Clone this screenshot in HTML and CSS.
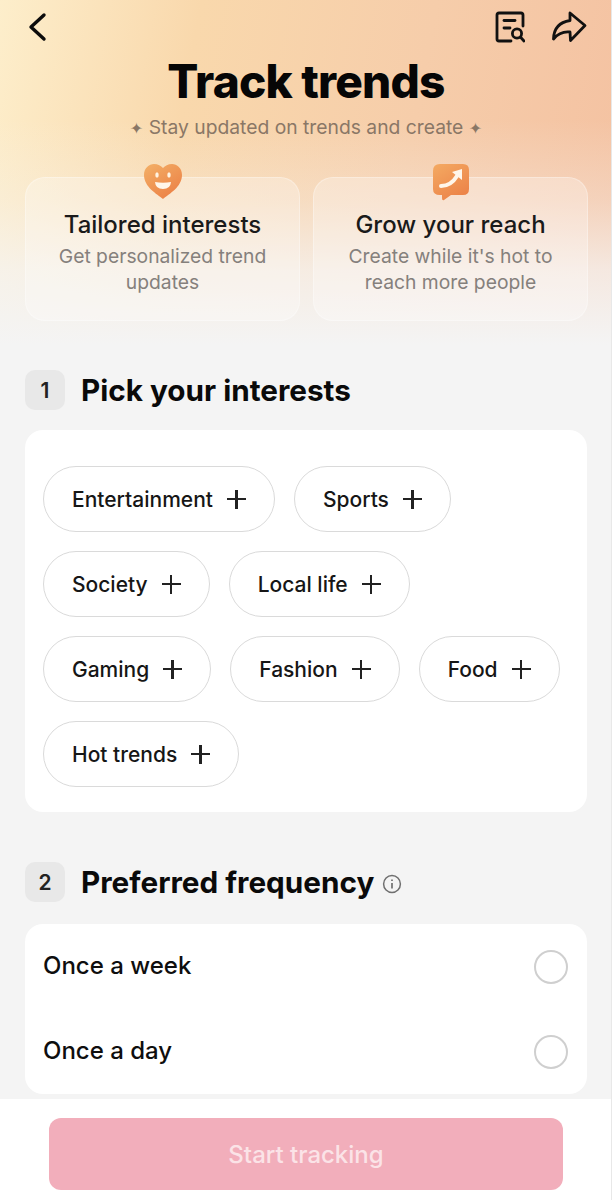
FILE: index.html
```html
<!doctype html>
<html lang="en">
<head>
    <meta charset="utf-8">
    <meta name="viewport" content="width=device-width, initial-scale=1">
    <title>Track trends</title>

    <link rel="stylesheet" href="styles.css">

</head>
<body>
<div class="page">
    <main class="content">
        <div class="nav">
            <svg class="icon-back" width="20" height="30" viewBox="0 0 20 30" fill="none" stroke="#0c0c0c" stroke-width="3.4" stroke-linecap="round" stroke-linejoin="round">
                <path d="M16 3 L3 15 L16 27"/>
            </svg>
            <div class="nav-right">
                <svg width="30" height="32" viewBox="0 0 30 32" fill="none" stroke="#111" stroke-width="2.8" stroke-linecap="round" stroke-linejoin="round">
                    <path d="M28 15 V4 Q28 2 26 2 H4 Q2 2 2 4 V28 Q2 30 4 30 H16"/>
                    <path d="M9 9.5 H20"/>
                    <path d="M9 17 H15"/>
                    <circle cx="22" cy="22.5" r="4.6"/>
                    <path d="M25.6 26.2 L29 30"/>
                </svg>
                <svg width="36" height="32" viewBox="0 0 36 32" fill="none" stroke="#111" stroke-width="2.8" stroke-linejoin="round" stroke-linecap="round">
                    <path d="M19 2 L34 14.5 L19.5 29.5 L19 21 Q9 20 2.5 28 Q3 12 19 9.5 Z"/>
                </svg>
            </div>
        </div>

        <h1 class="title">Track trends</h1>
        <p class="subtitle"><span class="star">✦</span> Stay updated on trends and create <span class="star">✦</span></p>

        <div class="benefits">
            <div class="benefit">
                <svg class="benefit-icon" width="40" height="38" viewBox="0 0 40 38">
                    <defs>
                        <linearGradient id="heart-fill" x1="0" y1="0" x2="0.7" y2="1">
                            <stop offset="0" stop-color="#f3b067"/>
                            <stop offset="1" stop-color="#ec8146"/>
                        </linearGradient>
                    </defs>
                    <path fill="url(#heart-fill)" d="M20 36 C14 31 1 24 1 12 C1 5 6 1 11 1 C15 1 18 3 20 5 C22 3 25 1 29 1 C34 1 39 5 39 12 C39 24 26 31 20 36 Z"/>
                    <ellipse cx="14" cy="12" rx="1.7" ry="2.8" fill="#fff3e2"/>
                    <ellipse cx="26" cy="12" rx="1.7" ry="2.8" fill="#fff3e2"/>
                    <path fill="#fff6ea" d="M12 19 Q20 20.5 28 19 Q27.5 26 20 26 Q12.5 26 12 19 Z"/>
                </svg>
                <h3>Tailored interests</h3>
                <p>Get personalized trend updates</p>
            </div>
            <div class="benefit">
                <svg class="benefit-icon" width="38" height="38" viewBox="0 0 38 38">
                    <defs>
                        <linearGradient id="bubble-fill" x1="0" y1="0" x2="0.6" y2="1">
                            <stop offset="0" stop-color="#f4aa62"/>
                            <stop offset="1" stop-color="#ec8449"/>
                        </linearGradient>
                    </defs>
                    <path fill="url(#bubble-fill)" d="M8 1 H31 Q37 1 37 7 V26 Q37 32 31 32 H19 L12 37 Q10 38 10 35 V32 H8 Q1 32 1 26 V8 Q1 1 8 1 Z"/>
                    <path fill="none" stroke="#fff6ea" stroke-width="4" stroke-linecap="round" d="M9 23 Q19 23 25 13"/>
                    <path fill="#fff6ea" d="M20 9 L30 6 L30 17 Z"/>
                </svg>
                <h3>Grow your reach</h3>
                <p>Create while it's hot to reach more people</p>
            </div>
        </div>

        <div class="section-head first">
            <span class="step">1</span>
            <h2>Pick your interests</h2>
        </div>
        <div class="panel chips">
            <div class="chip">Entertainment <span class="plus"></span></div>
            <div class="chip">Sports <span class="plus"></span></div>
            <div class="chip">Society <span class="plus"></span></div>
            <div class="chip">Local life <span class="plus"></span></div>
            <div class="chip">Gaming <span class="plus"></span></div>
            <div class="chip">Fashion <span class="plus"></span></div>
            <div class="chip">Food <span class="plus"></span></div>
            <div class="chip">Hot trends <span class="plus"></span></div>
        </div>

        <div class="section-head">
            <span class="step">2</span>
            <h2>Preferred frequency</h2>
            <svg class="info" width="20" height="20" viewBox="0 0 20 20" fill="none" stroke="#6f6f6f" stroke-width="1.5">
                <circle cx="10" cy="10" r="8.4"/>
                <path d="M10 9 V14.5" stroke-width="1.7"/>
                <path d="M10 5.4 V7" stroke-width="1.7"/>
            </svg>
        </div>
        <div class="panel options">
            <div class="option"><span class="option-label">Once a week</span> <span class="radio"></span></div>
            <div class="option"><span class="option-label">Once a day</span> <span class="radio"></span></div>
        </div>
    </main>

    <div class="footer">
        <div class="btn-start">Start tracking</div>
    </div>
</div>
</body>
</html>
```

FILE: styles.css
```css
body {
    margin: 0;
    font-family: Inter, "Liberation Sans", Arial, sans-serif;
    color: #111;
    background: #f4f4f4;
}

.page {
    height: 1200px;
    display: flex;
    flex-direction: column;
    overflow: hidden;
    border-right: 1px solid #e8e8e8;
}

/* peach wash behind the header, fades out into the page grey */
.content {
    flex: 1;
    padding: 0 24px 0 25px;
    background:
        linear-gradient(to bottom, rgba(245, 245, 245, 0) 120px, rgba(245, 245, 245, 0.3) 200px, rgba(245, 245, 245, 0.75) 270px, #f4f4f4 345px),
        linear-gradient(100deg, #fdeecb 0%, #f9d8ac 30%, #f6cdaa 65%, #f4c1a1 100%);
    background-repeat: no-repeat;
    background-size: 100% 345px, 100% 345px;
    background-color: #f4f4f4;
}

.nav {
    height: 56px;
    display: flex;
    justify-content: space-between;
    align-items: flex-start;
}

.icon-back {
    margin-top: 12px;
    margin-left: 3px;
}

.nav-right {
    display: flex;
    gap: 26px;
    margin-top: 11px;
}

.title {
    margin: 0;
    font-size: 46px;
    line-height: 50px;
    font-weight: 800;
    letter-spacing: -0.8px;
    text-align: center;
    color: #060606;
}

.subtitle {
    margin: 8px 0 0;
    font-size: 19.3px;
    line-height: 26px;
    text-align: center;
    color: #8a7766;
}

.star {
    font-family: "DejaVu Sans", sans-serif;
    font-size: 16px;
}

.benefits {
    display: grid;
    grid-template-columns: 275px 275px;
    gap: 13px;
    margin-top: 35px;
}

.benefit {
    position: relative;
    height: 144px;
    box-sizing: border-box;
    padding: 32px 20px 0;
    text-align: center;
    border: 1px solid rgba(255, 255, 255, 0.3);
    border-radius: 20px;
    background: rgba(255, 255, 255, 0.28);
}

.benefit-icon {
    position: absolute;
    top: -15px;
    left: 50%;
    transform: translateX(-50%);
}

.benefit h3 {
    margin: 0;
    font-size: 24px;
    line-height: 30px;
    font-weight: 500;
    color: #1a1a1a;
}

.benefit p {
    margin: 3px 0 0;
    font-size: 19.3px;
    line-height: 26px;
    color: #85807c;
}

.section-head {
    display: flex;
    align-items: center;
    margin-top: 50px;
}

.section-head.first {
    margin-top: 49px;
}

.step {
    width: 40px;
    height: 40px;
    border-radius: 10px;
    background: #e8e8e8;
    display: flex;
    align-items: center;
    justify-content: center;
    font-size: 21px;
    font-weight: 600;
    color: #222;
}

.section-head h2 {
    margin: 0 0 0 16px;
    font-size: 29.7px;
    line-height: 40px;
    font-weight: 700;
    color: #0a0a0a;
}

.info {
    margin-left: 8px;
    margin-top: 4px;
}

.panel {
    background: #fff;
    border-radius: 18px;
}

.chips {
    margin-top: 20px;
    padding: 36px 18px 25px;
    display: flex;
    flex-wrap: wrap;
    gap: 19px;
}

.chip {
    height: 66px;
    box-sizing: border-box;
    padding: 0 28px;
    display: flex;
    align-items: center;
    gap: 14px;
    border: 1.5px solid #dadada;
    border-radius: 33px;
    font-size: 21px;
    font-weight: 500;
    color: #161616;
}

.plus {
    position: relative;
    width: 19px;
    height: 19px;
}

.plus::before,
.plus::after {
    content: "";
    position: absolute;
    background: #222;
}

.plus::before {
    left: 0;
    right: 0;
    top: 8.25px;
    height: 2.5px;
}

.plus::after {
    top: 0;
    bottom: 0;
    left: 8.25px;
    width: 2.5px;
}

.options {
    margin-top: 22px;
    height: 170px;
}

.option {
    height: 85px;
    padding: 0 19px 0 18px;
    display: flex;
    align-items: center;
    justify-content: space-between;
    font-size: 24px;
    font-weight: 500;
    color: #0e0e0e;
}

.option-label {
    margin-bottom: 3px;
}

.radio {
    width: 34px;
    height: 34px;
    box-sizing: border-box;
    border: 2.5px solid #cfcfcf;
    border-radius: 50%;
}

.footer {
    height: 101px;
    box-sizing: border-box;
    padding: 19px 48px 10px 49px;
    background: #fff;
}

.btn-start {
    height: 72px;
    border-radius: 12px;
    background: #f2aebb;
    display: flex;
    align-items: center;
    justify-content: center;
    font-size: 24px;
    font-weight: 500;
    color: #fbe3e7;
}
```
